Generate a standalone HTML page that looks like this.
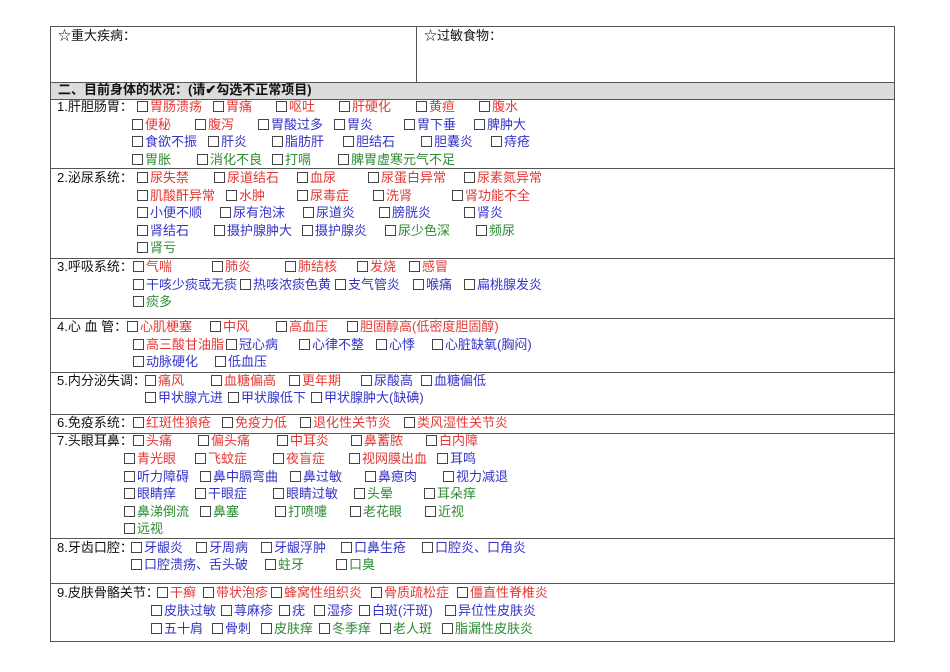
<!DOCTYPE html>
<html><head><meta charset="utf-8"><style>
body{margin:0;width:950px;height:672px;background:#fff;position:relative;overflow:hidden;font-family:"Liberation Sans","Noto Sans CJK SC",sans-serif;font-size:13px;color:#111}
.l{position:absolute;background:#555}
i{position:absolute;font-style:normal;white-space:nowrap;line-height:16px}
i b{display:inline-block;width:9px;height:9px;border:1px solid #444;margin-right:2px;vertical-align:-1px;font-weight:normal}
.r{color:#e53935}.u{color:#3434c8}.g{color:#2e8b34}.k{color:#111}
</style></head><body>
<div class="l" style="left:50px;top:26px;width:845px;height:1px"></div>
<div class="l" style="left:50px;top:26px;width:1px;height:616px"></div>
<div class="l" style="left:894px;top:26px;width:1px;height:616px"></div>
<div class="l" style="left:416px;top:26px;width:1px;height:56px"></div>
<div style="position:absolute;left:51px;top:82px;width:843px;height:17px;background:#dcdcdc"></div>
<div class="l" style="left:50px;top:82px;width:845px;height:1px"></div>
<div class="l" style="left:50px;top:99px;width:845px;height:1px"></div>
<div class="l" style="left:50px;top:168px;width:845px;height:1px"></div>
<div class="l" style="left:50px;top:258px;width:845px;height:1px"></div>
<div class="l" style="left:50px;top:318px;width:845px;height:1px"></div>
<div class="l" style="left:50px;top:372px;width:845px;height:1px"></div>
<div class="l" style="left:50px;top:414px;width:845px;height:1px"></div>
<div class="l" style="left:50px;top:433px;width:845px;height:1px"></div>
<div class="l" style="left:50px;top:538px;width:845px;height:1px"></div>
<div class="l" style="left:50px;top:583px;width:845px;height:1px"></div>
<div class="l" style="left:50px;top:641px;width:845px;height:1px"></div>

<i class="k" style="left:58px;top:28px">☆重大疾病：</i>
<i class="k" style="left:424px;top:28px">☆过敏食物：</i>
<i class="k" style="left:58px;top:82px;font-weight:bold">二、目前身体的状况：(请✔勾选不正常项目)</i>

<i class="k" style="left:57px;top:99px">1.肝胆肠胃：</i>
<i class="r" style="left:137px;top:99px"><b></b>胃肠溃疡</i><i class="r" style="left:213px;top:99px"><b></b>胃痛</i><i class="r" style="left:276px;top:99px"><b></b>呕吐</i><i class="r" style="left:339px;top:99px"><b></b>肝硬化</i><i class="r" style="left:416px;top:99px"><b></b>黄疸</i><i class="r" style="left:479px;top:99px"><b></b>腹水</i>
<i class="r" style="left:132px;top:117px"><b></b>便秘</i><i class="r" style="left:195px;top:117px"><b></b>腹泻</i><i class="u" style="left:258px;top:117px"><b></b>胃酸过多</i><i class="u" style="left:334px;top:117px"><b></b>胃炎</i><i class="u" style="left:404px;top:117px"><b></b>胃下垂</i><i class="u" style="left:474px;top:117px"><b></b>脾肿大</i>
<i class="u" style="left:132px;top:134px"><b></b>食欲不振</i><i class="u" style="left:208px;top:134px"><b></b>肝炎</i><i class="u" style="left:272px;top:134px"><b></b>脂肪肝</i><i class="u" style="left:343px;top:134px"><b></b>胆结石</i><i class="u" style="left:421px;top:134px"><b></b>胆囊炎</i><i class="u" style="left:491px;top:134px"><b></b>痔疮</i>
<i class="g" style="left:132px;top:152px"><b></b>胃胀</i><i class="g" style="left:197px;top:152px"><b></b>消化不良</i><i class="g" style="left:272px;top:152px"><b></b>打嗝</i><i class="g" style="left:338px;top:152px"><b></b>脾胃虚寒元气不足</i>

<i class="k" style="left:57px;top:170px">2.泌尿系统：</i>
<i class="r" style="left:137px;top:170px"><b></b>尿失禁</i><i class="r" style="left:214px;top:170px"><b></b>尿道结石</i><i class="r" style="left:297px;top:170px"><b></b>血尿</i><i class="r" style="left:368px;top:170px"><b></b>尿蛋白异常</i><i class="r" style="left:464px;top:170px"><b></b>尿素氮异常</i>
<i class="r" style="left:137px;top:188px"><b></b>肌酸酐异常</i><i class="r" style="left:226px;top:188px"><b></b>水肿</i><i class="r" style="left:297px;top:188px"><b></b>尿毒症</i><i class="r" style="left:373px;top:188px"><b></b>洗肾</i><i class="r" style="left:452px;top:188px"><b></b>肾功能不全</i>
<i class="u" style="left:137px;top:205px"><b></b>小便不顺</i><i class="u" style="left:220px;top:205px"><b></b>尿有泡沫</i><i class="u" style="left:303px;top:205px"><b></b>尿道炎</i><i class="u" style="left:379px;top:205px"><b></b>膀胱炎</i><i class="u" style="left:464px;top:205px"><b></b>肾炎</i>
<i class="u" style="left:137px;top:223px"><b></b>肾结石</i><i class="u" style="left:214px;top:223px"><b></b>摄护腺肿大</i><i class="u" style="left:302px;top:223px"><b></b>摄护腺炎</i><i class="g" style="left:385px;top:223px"><b></b>尿少色深</i><i class="g" style="left:476px;top:223px"><b></b>频尿</i>
<i class="g" style="left:137px;top:240px"><b></b>肾亏</i>

<i class="k" style="left:57px;top:259px">3.呼吸系统：</i>
<i class="r" style="left:133px;top:259px"><b></b>气喘</i><i class="r" style="left:212px;top:259px"><b></b>肺炎</i><i class="r" style="left:285px;top:259px"><b></b>肺结核</i><i class="r" style="left:357px;top:259px"><b></b>发烧</i><i class="r" style="left:409px;top:259px"><b></b>感冒</i>
<i class="u" style="left:133px;top:277px"><b></b>干咳少痰或无痰</i><i class="u" style="left:240px;top:277px"><b></b>热咳浓痰色黄</i><i class="u" style="left:335px;top:277px"><b></b>支气管炎</i><i class="u" style="left:413px;top:277px"><b></b>喉痛</i><i class="u" style="left:464px;top:277px"><b></b>扁桃腺发炎</i>
<i class="g" style="left:133px;top:294px"><b></b>痰多</i>

<i class="k" style="left:57px;top:319px">4.心 血 管：</i>
<i class="r" style="left:127px;top:319px"><b></b>心肌梗塞</i><i class="r" style="left:210px;top:319px"><b></b>中风</i><i class="r" style="left:276px;top:319px"><b></b>高血压</i><i class="r" style="left:347px;top:319px"><b></b>胆固醇高(低密度胆固醇)</i>
<i class="r" style="left:133px;top:337px"><b></b>高三酸甘油脂</i><i class="u" style="left:226px;top:337px"><b></b>冠心病</i><i class="u" style="left:299px;top:337px"><b></b>心律不整</i><i class="u" style="left:376px;top:337px"><b></b>心悸</i><i class="u" style="left:432px;top:337px"><b></b>心脏缺氧(胸闷)</i>
<i class="u" style="left:133px;top:354px"><b></b>动脉硬化</i><i class="u" style="left:215px;top:354px"><b></b>低血压</i>

<i class="k" style="left:57px;top:373px">5.内分泌失调：</i>
<i class="r" style="left:145px;top:373px"><b></b>痛风</i><i class="r" style="left:211px;top:373px"><b></b>血糖偏高</i><i class="r" style="left:289px;top:373px"><b></b>更年期</i><i class="u" style="left:361px;top:373px"><b></b>尿酸高</i><i class="u" style="left:421px;top:373px"><b></b>血糖偏低</i>
<i class="u" style="left:145px;top:390px"><b></b>甲状腺亢进</i><i class="u" style="left:228px;top:390px"><b></b>甲状腺低下</i><i class="u" style="left:311px;top:390px"><b></b>甲状腺肿大(缺碘)</i>

<i class="k" style="left:57px;top:415px">6.免疫系统：</i>
<i class="r" style="left:133px;top:415px"><b></b>红斑性狼疮</i><i class="r" style="left:222px;top:415px"><b></b>免疫力低</i><i class="r" style="left:300px;top:415px"><b></b>退化性关节炎</i><i class="r" style="left:404px;top:415px"><b></b>类风湿性关节炎</i>

<i class="k" style="left:57px;top:433px">7.头眼耳鼻：</i>
<i class="r" style="left:133px;top:433px"><b></b>头痛</i><i class="r" style="left:198px;top:433px"><b></b>偏头痛</i><i class="r" style="left:277px;top:433px"><b></b>中耳炎</i><i class="r" style="left:351px;top:433px"><b></b>鼻蓄脓</i><i class="r" style="left:426px;top:433px"><b></b>白内障</i>
<i class="r" style="left:124px;top:451px"><b></b>青光眼</i><i class="r" style="left:195px;top:451px"><b></b>飞蚊症</i><i class="r" style="left:273px;top:451px"><b></b>夜盲症</i><i class="r" style="left:349px;top:451px"><b></b>视网膜出血</i><i class="u" style="left:437px;top:451px"><b></b>耳鸣</i>
<i class="u" style="left:124px;top:469px"><b></b>听力障碍</i><i class="u" style="left:200px;top:469px"><b></b>鼻中膈弯曲</i><i class="u" style="left:290px;top:469px"><b></b>鼻过敏</i><i class="u" style="left:365px;top:469px"><b></b>鼻瘜肉</i><i class="u" style="left:443px;top:469px"><b></b>视力减退</i>
<i class="u" style="left:124px;top:486px"><b></b>眼睛痒</i><i class="u" style="left:195px;top:486px"><b></b>干眼症</i><i class="u" style="left:273px;top:486px"><b></b>眼睛过敏</i><i class="g" style="left:354px;top:486px"><b></b>头晕</i><i class="g" style="left:424px;top:486px"><b></b>耳朵痒</i>
<i class="g" style="left:124px;top:504px"><b></b>鼻涕倒流</i><i class="g" style="left:200px;top:504px"><b></b>鼻塞</i><i class="g" style="left:275px;top:504px"><b></b>打喷嚏</i><i class="g" style="left:350px;top:504px"><b></b>老花眼</i><i class="g" style="left:425px;top:504px"><b></b>近视</i>
<i class="g" style="left:124px;top:521px"><b></b>远视</i>

<i class="k" style="left:57px;top:540px">8.牙齿口腔：</i>
<i class="u" style="left:131px;top:540px"><b></b>牙龈炎</i><i class="u" style="left:196px;top:540px"><b></b>牙周病</i><i class="u" style="left:261px;top:540px"><b></b>牙龈浮肿</i><i class="u" style="left:341px;top:540px"><b></b>口鼻生疮</i><i class="u" style="left:422px;top:540px"><b></b>口腔炎、口角炎</i>
<i class="u" style="left:131px;top:557px"><b></b>口腔溃疡、舌头破</i><i class="g" style="left:265px;top:557px"><b></b>蛀牙</i><i class="g" style="left:336px;top:557px"><b></b>口臭</i>

<i class="k" style="left:57px;top:585px">9.皮肤骨骼关节：</i>
<i class="r" style="left:157px;top:585px"><b></b>干癣</i><i class="r" style="left:203px;top:585px"><b></b>带状泡疹</i><i class="r" style="left:271px;top:585px"><b></b>蜂窝性组织炎</i><i class="r" style="left:371px;top:585px"><b></b>骨质疏松症</i><i class="r" style="left:457px;top:585px"><b></b>僵直性脊椎炎</i>
<i class="u" style="left:151px;top:603px"><b></b>皮肤过敏</i><i class="u" style="left:221px;top:603px"><b></b>荨麻疹</i><i class="u" style="left:279px;top:603px"><b></b>疣</i><i class="u" style="left:314px;top:603px"><b></b>湿疹</i><i class="u" style="left:359px;top:603px"><b></b>白斑(汗斑)</i><i class="u" style="left:445px;top:603px"><b></b>异位性皮肤炎</i>
<i class="u" style="left:151px;top:621px"><b></b>五十肩</i><i class="u" style="left:212px;top:621px"><b></b>骨刺</i><i class="g" style="left:261px;top:621px"><b></b>皮肤痒</i><i class="g" style="left:319px;top:621px"><b></b>冬季痒</i><i class="g" style="left:380px;top:621px"><b></b>老人斑</i><i class="g" style="left:442px;top:621px"><b></b>脂漏性皮肤炎</i>
</body></html>
